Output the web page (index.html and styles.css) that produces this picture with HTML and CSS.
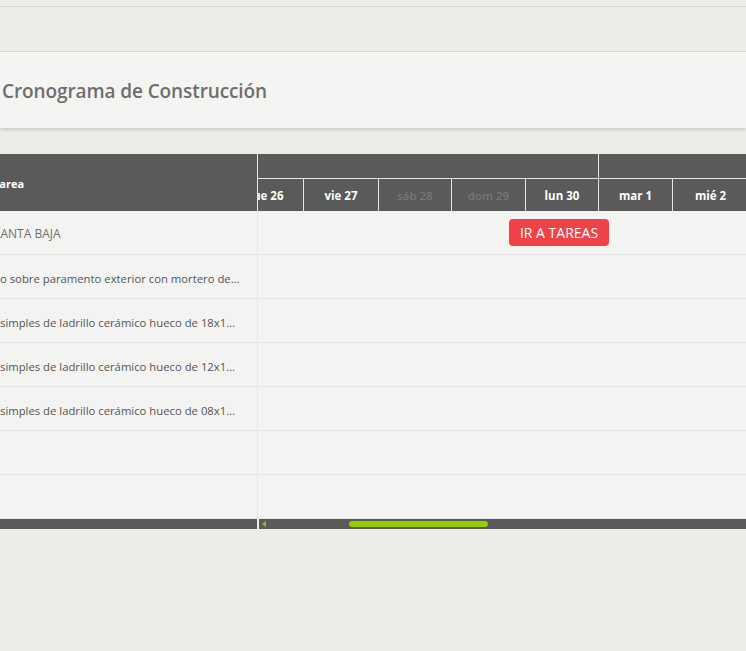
FILE: index.html
```html
<!DOCTYPE html>
<html lang="es">
<head>
<meta charset="utf-8">
<link rel="stylesheet" href="styles.css">
</head>
<body>
<div class="topstrip"></div>
<div class="band"></div>
<div class="panel"><h1 class="title">Cronograma de Construcción</h1></div>
<div class="gantt">
  <div class="grid">
    <div class="grid-head"><div class="clip"><span class="head-text">Tarea</span></div></div>
    <div class="grid-row"><div class="clip"><span class="row-text group">PLANTA BAJA</span></div></div>
    <div class="grid-row"><div class="clip"><span class="row-text">o sobre paramento exterior con mortero de...</span></div></div>
    <div class="grid-row"><div class="clip"><span class="row-text">simples de ladrillo cerámico hueco de 18x1...</span></div></div>
    <div class="grid-row"><div class="clip"><span class="row-text">simples de ladrillo cerámico hueco de 12x1...</span></div></div>
    <div class="grid-row"><div class="clip"><span class="row-text">simples de ladrillo cerámico hueco de 08x1...</span></div></div>
    <div class="grid-row"></div>
    <div class="grid-row"></div>
    <div class="grid-scroll"></div>
  </div>
  <div class="timeline">
    <div class="tl-inner">
      <div class="tl-top">
        <div class="tl-group g1"></div>
        <div class="tl-group g2"></div>
      </div>
      <div class="tl-days">
        <div class="day">jue 26</div>
        <div class="day">vie 27</div>
        <div class="day weekend">sáb 28</div>
        <div class="day weekend">dom 29</div>
        <div class="day">lun 30</div>
        <div class="day">mar 1</div>
        <div class="day">mié 2</div>
      </div>
    </div>
    <div class="tl-body">
      <div class="tl-row"><button class="goto">IR A TAREAS</button></div>
      <div class="tl-row"></div>
      <div class="tl-row"></div>
      <div class="tl-row"></div>
      <div class="tl-row"></div>
      <div class="tl-row"></div>
      <div class="tl-row last"></div>
    </div>
    <div class="tl-scroll">
      <span class="arrow"></span>
      <span class="thumb"></span>
    </div>
  </div>
</div>
</body>
</html>
```
FILE: styles.css
```css
html, body {
  margin: 0;
  padding: 0;
  background: #ecece8;
  font-family: "Open Sans", "Liberation Sans", sans-serif;
  width: 746px;
  height: 651px;
  overflow: hidden;
}
.topstrip {
  height: 6px;
  border-bottom: 1px solid #d9d9d6;
}
.band {
  height: 44px;
  border-bottom: 1px solid #d6d6d3;
}
.panel {
  height: 76px;
  background: #f4f4f2;
  box-shadow: 0 2px 3px rgba(0,0,0,0.14);
  display: flex;
  align-items: center;
}
.title {
  margin: 2px 0 0 2px;
  font-size: 19px;
  font-weight: 600;
  color: #6e6e6e;
  letter-spacing: -0.1px;
}
.gantt {
  margin-top: 26px;
  display: flex;
  height: 375px;
}
.grid {
  width: 257px;
  border-right: 1px solid #e6e6e4;
  display: flex;
  flex-direction: column;
}
.clip {
  overflow: hidden;
  white-space: nowrap;
  width: 100%;
}
.grid-head {
  height: 57px;
  background: #5a5a5a;
  display: flex;
  align-items: center;
}
.head-text {
  display: inline-block;
  margin-left: -7px;
  color: #fff;
  font-size: 11px;
  font-weight: 700;
  margin-bottom: 3px;
}
.grid-row {
  height: 43px;
  border-bottom: 1px solid #e3e3e1;
  background: #f3f3f1;
  display: flex;
  align-items: center;
}
.row-text {
  display: inline-block;
  font-size: 11.3px;
  color: #555;
  margin-left: 0;
  margin-bottom: 1px;
}
.row-text.group {
  margin-left: -13px;
  color: #707070;
  font-size: 12px;
  margin-bottom: 2px;
}
.grid-scroll {
  height: 10px;
  background: #5a5a5a;
}
.timeline {
  flex: 1;
  overflow: hidden;
  display: flex;
  flex-direction: column;
  background: #f3f3f1;
}
.tl-inner {
  margin-left: -28px;
  background: #5a5a5a;
  height: 57px;
  width: 600px;
}
.tl-top {
  height: 24px;
  display: flex;
  border-bottom: 1px solid #e6e6e6;
}
.tl-group {
  height: 24px;
}
.tl-group.g1 {
  width: 368px;
  border-right: 1px solid #e6e6e6;
}
.tl-days {
  display: flex;
  height: 32px;
}
.day {
  width: 73px;
  flex: 0 0 auto;
  border-right: 1px solid #e6e6e6;
  color: #fff;
  font-size: 11.5px;
  font-weight: 700;
  display: flex;
  align-items: center;
  justify-content: center;
  padding-top: 1px;
  box-sizing: border-box;
}
.day:nth-child(1) { width: 74px; }
.day:nth-child(2) { width: 75px; }
.day:nth-child(3) { width: 73px; }
.day:nth-child(4) { width: 74px; }
.day:nth-child(5) { width: 73px; }
.day:nth-child(6) { width: 74px; }
.day:nth-child(7) { width: 110px; border-right: none; justify-content: flex-start; padding-left: 22px; }
.day.weekend {
  color: #777;
  font-weight: 600;
}
.tl-body {
  display: flex;
  flex-direction: column;
}
.tl-row {
  height: 43px;
  border-bottom: 1px solid #e3e3e1;
  position: relative;
}
.goto {
  position: absolute;
  left: 251px;
  top: 8px;
  width: 100px;
  height: 27px;
  border: none;
  border-radius: 4px;
  background: #ef4349;
  color: #fff;
  font-family: "Open Sans", "Liberation Sans", sans-serif;
  font-size: 14px;
  padding: 0;
}
.tl-scroll {
  height: 10px;
  background: #5a5a5a;
  display: flex;
  align-items: center;
  border-left: 1px solid #f3f3f1;
}
.arrow {
  width: 0;
  height: 0;
  border-top: 3px solid transparent;
  border-bottom: 3px solid transparent;
  border-right: 4px solid #8fc400;
  margin-left: 3px;
}
.thumb {
  margin-left: 83px;
  width: 139px;
  height: 6px;
  border-radius: 3px;
  background: #99cc00;
}
```
